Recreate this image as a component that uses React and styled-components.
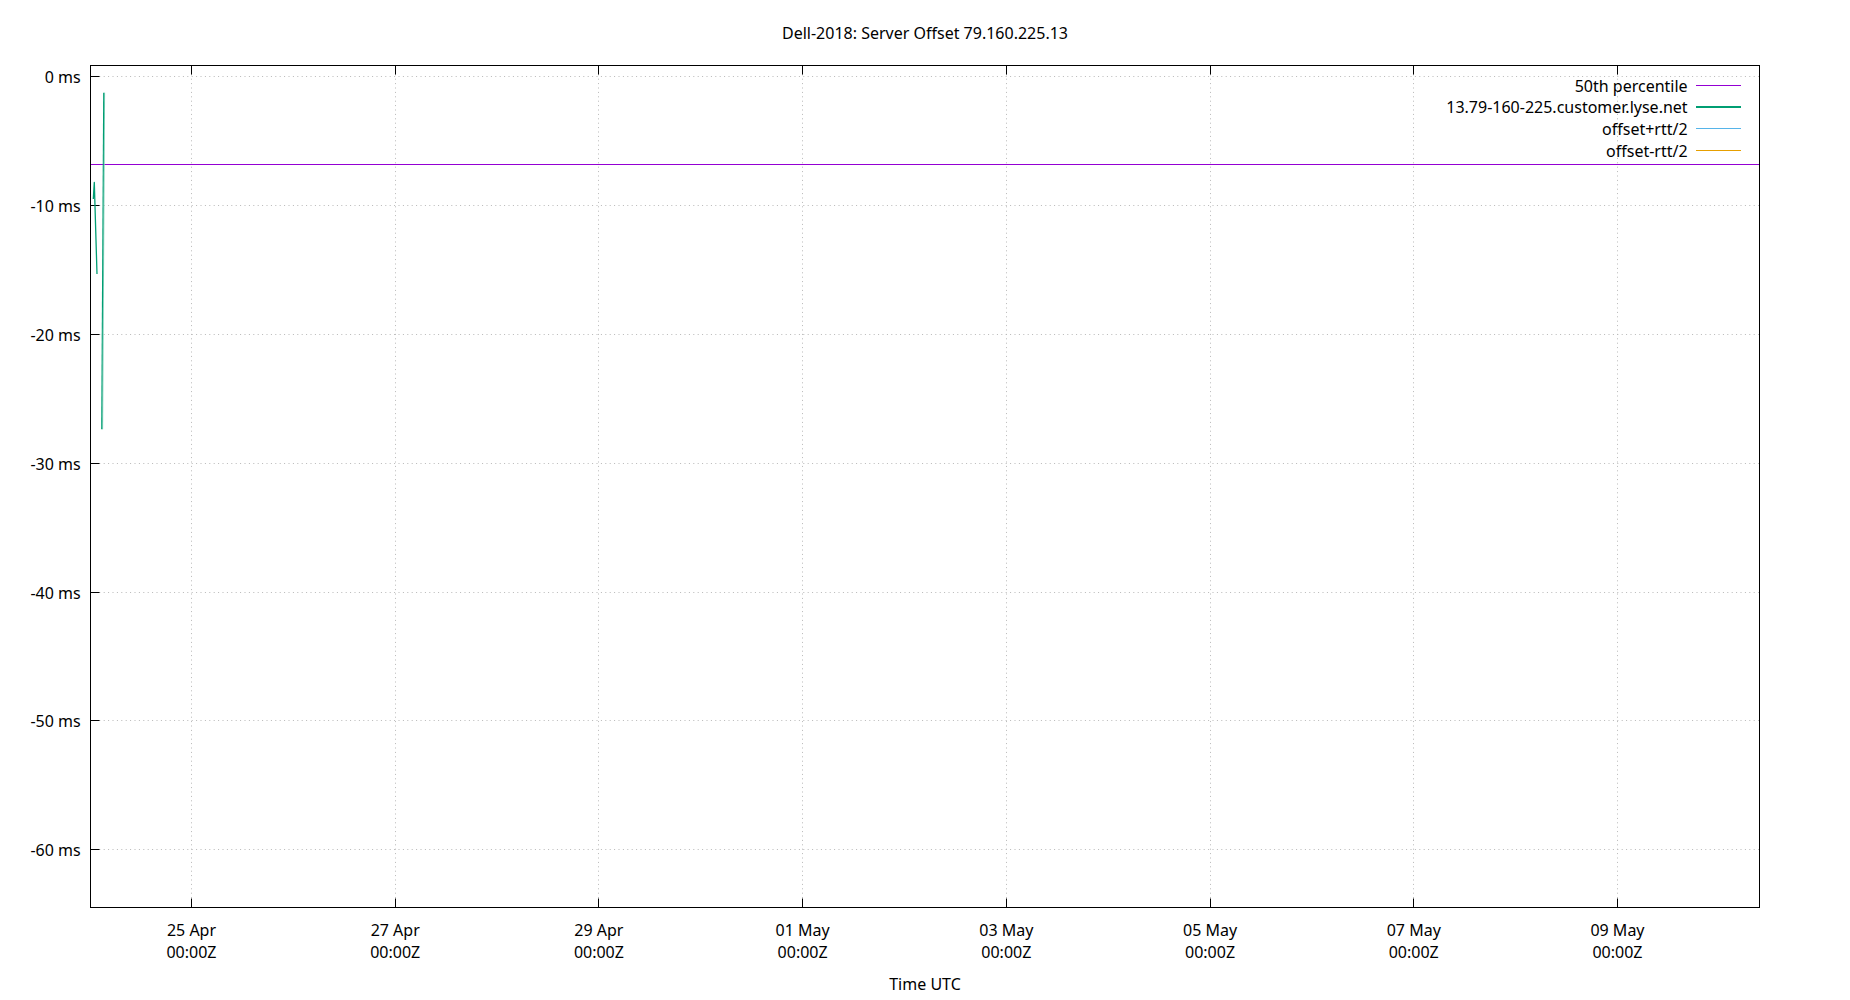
import React from "react";
import styled, { createGlobalStyle } from "styled-components";

const GlobalStyle = createGlobalStyle`
  html, body {
    margin: 0;
    padding: 0;
    background: #ffffff;
  }
  body {
    font-family: "Noto Sans", "Open Sans", sans-serif;
    color: #000000;
  }
`;

const Page = styled.div`
  width: 1850px;
  height: 1000px;
  display: flex;
  flex-direction: column;
  align-items: stretch;
  background: #ffffff;
  overflow: hidden;
`;

const Title = styled.h1`
  margin: 0;
  padding-top: 22px;
  font-family: "Noto Sans", "Open Sans", sans-serif;
  font-weight: 400;
  font-size: 16px;
  line-height: 22px;
  text-align: center;
  color: #000;
`;

const ChartArea = styled.div`
  position: relative;
  height: 929px;
  flex: none;
`;

const ChartSvg = styled.svg`
  display: block;
  width: 1850px;
  height: 929px;
`;

const AxisTitle = styled.div`
  font-family: "Noto Sans", "Open Sans", sans-serif;
  font-size: 16px;
  line-height: 22px;
  text-align: center;
  color: #000;
`;

const Frame = styled.rect`
  fill: none;
  stroke: #000;
  stroke-width: 1;
`;

const GridLine = styled.line`
  stroke: #b8b8b8;
  stroke-width: 1;
  stroke-dasharray: 1 3.4;
`;

const Tick = styled.line`
  stroke: #000;
  stroke-width: 1;
`;

const TickLabel = styled.text`
  font-family: "Noto Sans", "Open Sans", sans-serif;
  font-size: 16px;
  fill: #000;
  text-anchor: ${(p) => p.$anchor || "middle"};
`;

const Series = styled.polyline`
  fill: none;
  stroke: ${(p) => p.$color};
  stroke-width: ${(p) => p.$width || 1.2};
  stroke-linejoin: round;
`;

const Legend = styled.div`
  position: absolute;
  top: 31.7px;
  right: 108.7px;
  display: grid;
  grid-template-columns: auto 45px;
  column-gap: 8.7px;
  grid-auto-rows: 21.67px;
  font-family: "Noto Sans", "Open Sans", sans-serif;
  font-size: 16px;
  line-height: 21.67px;
`;

const LegendLabel = styled.span`
  text-align: right;
  white-space: nowrap;
  color: #000;
`;

const LegendSwatch = styled.span`
  display: block;
  height: 1.2px;
  margin-top: 9px;
  background: ${(p) => p.$color};
`;

const LEFT = 90.5;
const RIGHT = 1759.5;
const TOP = 65.5;
const BOTTOM = 907.5;

const Y0 = 76.3;
const YSTEP = 128.83;
const yTicks = [0, -10, -20, -30, -40, -50, -60];

const X0 = 191.5;
const XSTEP = 203.71;
const xTicks = ["25 Apr", "27 Apr", "29 Apr", "01 May", "03 May", "05 May", "07 May", "09 May"];

const legendItems = [
  { label: "50th percentile", color: "#9400d3" },
  { label: "13.79-160-225.customer.lyse.net", color: "#009e73" },
  { label: "offset+rtt/2", color: "#56b4e9" },
  { label: "offset-rtt/2", color: "#e69f00" },
];

export default function App() {
  return (
    <>
      <GlobalStyle />
      <Page>
        <Title>Dell-2018: Server Offset 79.160.225.13</Title>
        <ChartArea>
          <ChartSvg viewBox="0 44 1850 929" xmlns="http://www.w3.org/2000/svg">
            {yTicks.map((v, i) => {
              const y = Math.round(Y0 + YSTEP * i) + 0.5;
              return (
                <g key={"y" + v}>
                  <GridLine x1={LEFT} x2={RIGHT} y1={y} y2={y} />
                  <Tick x1={LEFT} x2={LEFT + 9} y1={y} y2={y} />
                  <TickLabel $anchor="end" x={80.7} y={Y0 + YSTEP * i + 7}>
                    {v + " ms"}
                  </TickLabel>
                </g>
              );
            })}
            {xTicks.map((label, i) => {
              const x = Math.round(X0 + XSTEP * i - 0.5) + 0.5;
              return (
                <g key={"x" + label}>
                  <GridLine x1={x} x2={x} y1={TOP} y2={BOTTOM} />
                  <Tick x1={x} x2={x} y1={TOP} y2={TOP + 9} />
                  <Tick x1={x} x2={x} y1={BOTTOM} y2={BOTTOM - 9} />
                  <TickLabel x={X0 + XSTEP * i} y={936}>
                    {label}
                  </TickLabel>
                  <TickLabel x={X0 + XSTEP * i} y={957.7}>
                    00:00Z
                  </TickLabel>
                </g>
              );
            })}
            <Series $color="#9400d3" $width={1.2} points={`${LEFT},164.5 ${RIGHT},164.5`} />
            <Series $color="#009e73" $width={1.3} points="93.3,199 94.3,182.3 97,274" />
            <Series $color="#7fcfb9" $width={1} points="102.6,429.3 104.6,92.7" />
            <Series $color="#009e73" $width={1.1} points="101.7,429.3 103.7,92.7" />
            <Frame x={LEFT} y={TOP} width={RIGHT - LEFT} height={BOTTOM - TOP} />
          </ChartSvg>
          <Legend>
            {legendItems.map((item) => (
              <React.Fragment key={item.label}>
                <LegendLabel>{item.label}</LegendLabel>
                <LegendSwatch $color={item.color} />
              </React.Fragment>
            ))}
          </Legend>
        </ChartArea>
        <AxisTitle>Time UTC</AxisTitle>
      </Page>
    </>
  );
}
